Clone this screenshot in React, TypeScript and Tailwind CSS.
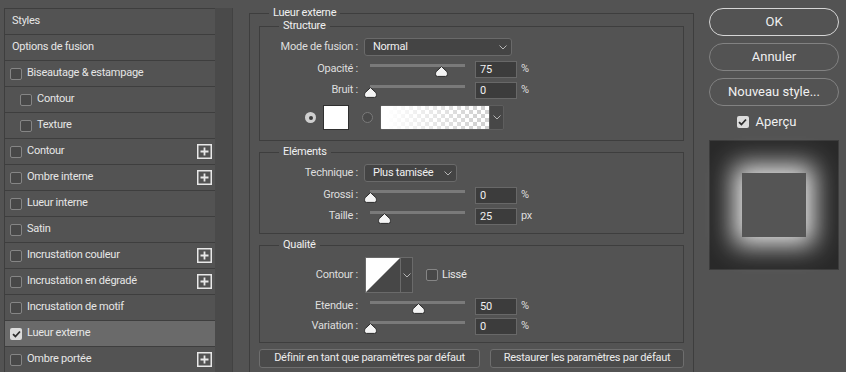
import React from 'react';

type Row = { label: string; cb?: boolean; indent?: boolean; plus?: boolean; checked?: boolean; selected?: boolean };

const rows: Row[] = [
    { label: 'Styles' },
    { label: 'Options de fusion' },
    { label: 'Biseautage & estampage', cb: true },
    { label: 'Contour', cb: true, indent: true },
    { label: 'Texture', cb: true, indent: true },
    { label: 'Contour', cb: true, plus: true },
    { label: 'Ombre interne', cb: true, plus: true },
    { label: 'Lueur interne', cb: true },
    { label: 'Satin', cb: true },
    { label: 'Incrustation couleur', cb: true, plus: true },
    { label: 'Incrustation en dégradé', cb: true, plus: true },
    { label: 'Incrustation de motif', cb: true },
    { label: 'Lueur externe', cb: true, checked: true, selected: true },
    { label: 'Ombre portée', cb: true, plus: true },
];

const Checkbox: React.FC<{ checked?: boolean }> = ({ checked }) =>
    checked ? (
        <div className="w-[12px] h-[12px] rounded-[2px] bg-[#dcdcdc] flex items-center justify-center shrink-0">
            <svg width="9" height="8" viewBox="0 0 9 8">
                <path d="M1 4.2 L3.4 6.5 L8 1.5" stroke="#2e2e2e" strokeWidth="1.8" fill="none" />
            </svg>
        </div>
    ) : (
        <div className="w-[12px] h-[12px] rounded-[2px] border border-[#858585] bg-[#484848] shrink-0" />
    );

const PlusBox = () => (
    <svg width="15" height="15" viewBox="0 0 15 15" className="shrink-0">
        <rect x="0.75" y="0.75" width="13.5" height="13.5" fill="none" stroke="#e8e8e8" strokeWidth="1.5" />
        <path d="M7.5 3.5 V11.5 M3.5 7.5 H11.5" stroke="#e8e8e8" strokeWidth="1.8" />
    </svg>
);

const Chevron = () => (
    <svg width="8" height="5" viewBox="0 0 8 5">
        <path d="M0.5 0.5 L4 4 L7.5 0.5" stroke="#b5b5b5" strokeWidth="1" fill="none" />
    </svg>
);

const Thumb = () => (
    <svg width="13" height="11" viewBox="0 0 13 11">
        <path d="M6.5 0.6 L11.6 5.4 Q12.4 6.2 12.4 7.4 V8.6 Q12.4 10.4 10.6 10.4 H2.4 Q0.6 10.4 0.6 8.6 V7.4 Q0.6 6.2 1.4 5.4 Z" fill="#f4f4f4" stroke="#2a2a2a" strokeWidth="1" />
    </svg>
);

const Label: React.FC<{ children: React.ReactNode }> = ({ children }) => (
    <div className="w-[98px] text-right shrink-0 whitespace-nowrap">{children}</div>
);

const SliderRow: React.FC<{ label: string; pct: number; value: string; unit: string; className?: string }> = ({ label, pct, value, unit, className }) => (
    <div className={`flex items-center h-[17px] ${className ?? ''}`}>
        <Label>{label}</Label>
        <div className="relative w-[95px] h-[17px] ml-[12px] shrink-0">
            <div className="absolute top-[3px] left-0 right-0 h-[3px] bg-[#7a7a7a]" />
            <div className="absolute top-[5px] flex" style={{ left: `calc(${pct}% - 6px)` }}>
                <Thumb />
            </div>
        </div>
        <div className="ml-[10px] w-[42px] h-[17px] bg-[#3c3c3c] border border-[#686868] pl-[4px] leading-[15px] text-[#f0f0f0]">{value}</div>
        <div className="ml-[4px]">{unit}</div>
    </div>
);

const Dropdown: React.FC<{ text: string; width: string }> = ({ text, width }) => (
    <div className={`ml-[6px] h-[18px] ${width} rounded-[3px] border border-[#6a6a6a] bg-[#444444] flex items-center justify-between pl-[8px] pr-[4px] text-[#f0f0f0]`}>
        <span>{text}</span>
        <Chevron />
    </div>
);

const GroupTitle: React.FC<{ children: React.ReactNode }> = ({ children }) => (
    <div className="-mt-[8px] ml-[19px] px-[4px] h-[14px] leading-[14px] w-fit bg-[#535353] text-[#f0f0f0]">{children}</div>
);

export default function App() {
    return (
        <div className="w-[846px] h-[372px] bg-[#535353] flex overflow-hidden text-[11px] tracking-[-0.25px] text-[#dedede] [font-family:Roboto,sans-serif]">
            {/* Style list */}
            <div className="flex pt-[8px] pl-[4px] shrink-0">
                <div className="w-[211px] border-l border-t border-[#3e3e3e]">
                    {rows.map((r, i) => (
                        <div
                            key={i}
                            className={`h-[26px] border-b border-[#3e3e3e] flex items-center pr-[3px] ${r.selected ? 'bg-[#6a6a6a]' : ''} ${r.indent ? 'pl-[15px]' : 'pl-[5px]'}`}
                        >
                            {r.cb ? (
                                <>
                                    <Checkbox checked={r.checked} />
                                    <span className="ml-[5px] text-[#e6e6e6]">{r.label}</span>
                                </>
                            ) : (
                                <span className="ml-[2px] text-[#e6e6e6]">{r.label}</span>
                            )}
                            <div className="flex-1" />
                            {r.plus && <PlusBox />}
                        </div>
                    ))}
                </div>
                <div className="w-[18px] bg-[#4a4a4a] border-r border-[#424242]" />
            </div>

            {/* Settings */}
            <div className="ml-[16px] pt-[13px] shrink-0">
                <div className="w-[445px] h-[420px] border border-[#3e3e3e] px-[9px]">
                    <div className="-ml-[9px]">
                        <GroupTitle>Lueur externe</GroupTitle>
                    </div>

                    {/* Structure */}
                    <div className="mt-[6px] h-[115px] border border-[#3e3e3e]">
                        <GroupTitle>Structure</GroupTitle>
                        <div className="mt-[5px] flex items-center h-[18px]">
                            <Label>Mode de fusion :</Label>
                            <Dropdown text="Normal" width="w-[148px]" />
                        </div>
                        <SliderRow className="mt-[5px]" label="Opacité :" pct={75} value="75" unit="%" />
                        <SliderRow className="mt-[4px]" label="Bruit :" pct={0} value="0" unit="%" />
                        <div className="mt-[6px] h-[25px] flex items-center">
                            <div className="ml-[45px] w-[11px] h-[11px] rounded-full bg-[#cfcfcf] flex items-center justify-center">
                                <div className="w-[4px] h-[4px] rounded-full bg-[#3a3a3a]" />
                            </div>
                            <div className="ml-[7px] w-[26px] h-[25px] bg-white border border-[#2f2f2f]" />
                            <div className="ml-[13px] w-[11px] h-[11px] rounded-full border border-[#7a7a7a] bg-[#4a4a4a]" />
                            <div className="ml-[7px] w-[124px] h-[25px] flex border border-[#5e5e5e] rounded-[2px] overflow-hidden">
                                <div className="flex-1 [background:linear-gradient(to_right,#ffffff_5%,rgba(255,255,255,0)_90%),repeating-conic-gradient(#d2d2d2_0_25%,#ffffff_0_50%)_0_0/8px_8px]" />
                                <div className="w-[14px] bg-[#474747] border-l border-[#5e5e5e] flex items-center justify-center">
                                    <Chevron />
                                </div>
                            </div>
                        </div>
                    </div>

                    {/* Eléments */}
                    <div className="mt-[11px] h-[82px] border border-[#3e3e3e]">
                        <GroupTitle>Eléments</GroupTitle>
                        <div className="mt-[5px] flex items-center h-[18px]">
                            <Label>Technique :</Label>
                            <Dropdown text="Plus tamisée" width="w-[93px]" />
                        </div>
                        <SliderRow className="mt-[5px]" label="Grossi :" pct={0} value="0" unit="%" />
                        <SliderRow className="mt-[4px]" label="Taille :" pct={15} value="25" unit="px" />
                    </div>

                    {/* Qualité */}
                    <div className="mt-[11px] h-[98px] border border-[#3e3e3e]">
                        <GroupTitle>Qualité</GroupTitle>
                        <div className="mt-[5px] flex items-center h-[36px]">
                            <Label>Contour :</Label>
                            <div className="ml-[7px] h-[36px] flex border border-[#6a6a6a]">
                                <svg width="34" height="34" viewBox="0 0 34 34" className="block">
                                    <rect width="34" height="34" fill="#ffffff" />
                                    <path d="M0 34 L34 0 V34 Z" fill="#474747" />
                                </svg>
                                <div className="w-[12px] bg-[#474747] border-l border-[#6a6a6a] flex items-center justify-center">
                                    <Chevron />
                                </div>
                            </div>
                            <div className="ml-[13px]">
                                <Checkbox />
                            </div>
                            <span className="ml-[4px] text-[#e6e6e6]">Lissé</span>
                        </div>
                        <SliderRow className="mt-[5px]" label="Etendue :" pct={50} value="50" unit="%" />
                        <SliderRow className="mt-[3px]" label="Variation :" pct={0} value="0" unit="%" />
                    </div>

                    <div className="mt-[6px] flex gap-[10px]">
                        <div className="w-[221px] h-[19px] rounded-[3px] border border-[#6e6e6e] bg-[#4a4a4a] flex items-center justify-center text-[#ececec]">
                            Définir en tant que paramètres par défaut
                        </div>
                        <div className="w-[194px] h-[19px] rounded-[3px] border border-[#6e6e6e] bg-[#4a4a4a] flex items-center justify-center text-[#ececec]">
                            Restaurer les paramètres par défaut
                        </div>
                    </div>
                </div>
            </div>

            {/* Buttons + preview */}
            <div className="ml-[15px] pt-[8px] w-[130px] shrink-0 flex flex-col text-[13px] tracking-normal text-[#f0f0f0]">
                <div className="h-[28px] rounded-full border border-[#d6d6d6] flex items-center justify-center">OK</div>
                <div className="mt-[7px] h-[28px] rounded-full border border-[#828282] flex items-center justify-center">Annuler</div>
                <div className="mt-[7px] h-[28px] rounded-full border border-[#828282] flex items-center justify-center">Nouveau style...</div>
                <div className="mt-[9px] h-[14px] flex items-center justify-center pr-[15px]">
                    <Checkbox checked />
                    <span className="ml-[7px]">Aperçu</span>
                </div>
                <div className="mt-[11px] w-[130px] h-[130px] bg-[#292929] border border-[#3c3c3c] flex items-center justify-center">
                    <div className="w-[64px] h-[64px] bg-[#555555] shadow-[0_0_24px_8px_rgba(255,255,255,0.9)]" />
                </div>
            </div>
        </div>
    );
}
